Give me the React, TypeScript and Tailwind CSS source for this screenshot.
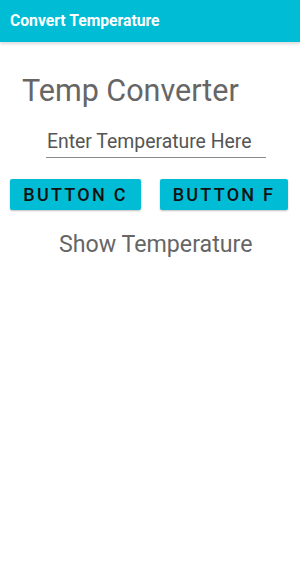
export default function App() {
  return (
    <div className="w-[300px] h-[582px] bg-white font-['Roboto',sans-serif] flex flex-col">
      {/* App bar */}
      <div className="h-[42px] bg-[#00bcd4] flex items-center px-[10px] shadow-[0_2px_3px_rgba(0,0,0,0.15)]">
        <span className="text-white font-bold text-[15.7px]">Convert Temperature</span>
      </div>

      <div className="flex flex-col">
        <h1 className="mt-[31px] ml-[22px] text-[30.5px] leading-[35px] text-[#666666]">Temp Converter</h1>

        <div className="mt-[23px] ml-[46px] w-[220px] border-b border-[#8a8a8a] pb-[2px]">
          <input
            className="w-full pl-[1px] text-[19.4px] leading-[22px] text-[#444] placeholder:text-[#555] outline-none bg-transparent"
            placeholder="Enter Temperature Here"
          />
        </div>

        <div className="mt-[21px] flex px-[10px] gap-[19px]">
          <button className="w-[131px] h-[31px] rounded-[2px] bg-[#00bcd4] text-[#111] font-medium text-[18px] tracking-[0.125em] shadow-[0_1px_2px_rgba(0,0,0,0.25)]">
            BUTTON C
          </button>
          <button className="w-[128px] h-[31px] rounded-[2px] bg-[#00bcd4] text-[#111] font-medium text-[18px] tracking-[0.125em] shadow-[0_1px_2px_rgba(0,0,0,0.25)]">
            BUTTON F
          </button>
        </div>

        <p className="mt-[20px] ml-[59px] text-[23.2px] leading-[28px] text-[#666666]">Show Temperature</p>
      </div>
    </div>
  );
}
